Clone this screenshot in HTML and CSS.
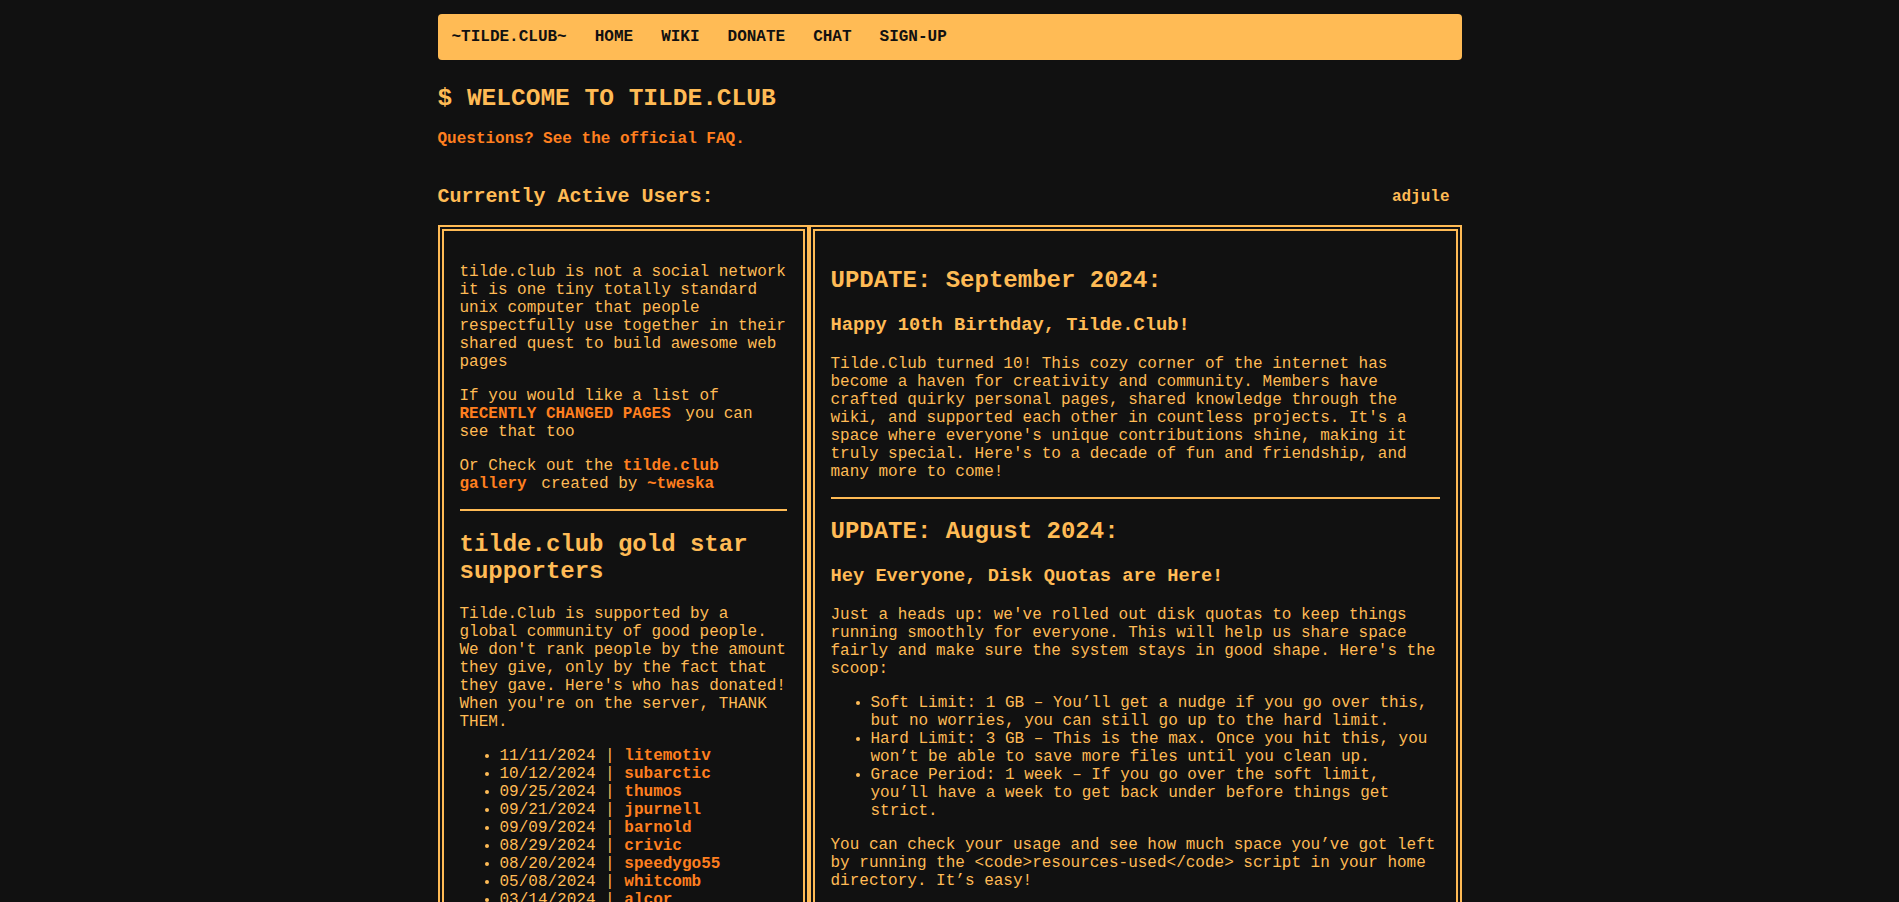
FILE: index.html
```html
<!DOCTYPE html>
<html lang="en">
<head>
<meta charset="utf-8">
<title>~tilde.club~</title>
<link rel="stylesheet" href="styles.css">
</head>
<body>
<div class="page">
  <nav class="nav">
    <a href="#">~TILDE.CLUB~</a>
    <a href="#">HOME</a>
    <a href="#">WIKI</a>
    <a href="#">DONATE</a>
    <a href="#">CHAT</a>
    <a href="#">SIGN-UP</a>
  </nav>

  <h1 class="title">$ WELCOME TO TILDE.CLUB</h1>
  <p class="faq"><a href="#">Questions? See the official FAQ.</a></p>

  <div class="users">
    <h3 class="users-title">Currently Active Users:</h3>
    <span class="who">adjule</span>
  </div>

  <div class="columns">
    <aside class="box side">
      <p>tilde.club is not a social network it is one tiny totally standard unix computer that people respectfully use together in their shared quest to build awesome web pages</p>
      <p>If you would like a list of <a class="gap" href="#">RECENTLY CHANGED PAGES</a> you can see that too</p>
      <p>Or Check out the <a class="gap" href="#">tilde.club gallery</a> created by <a href="#">~tweska</a></p>
      <hr>
      <h2>tilde.club gold star supporters</h2>
      <p>Tilde.Club is supported by a global community of good people. We don't rank people by the amount they give, only by the fact that they gave. Here's who has donated! When you're on the server, THANK THEM.</p>
      <ul class="donors">
        <li>11/11/2024 | <a href="#">litemotiv</a></li>
        <li>10/12/2024 | <a href="#">subarctic</a></li>
        <li>09/25/2024 | <a href="#">thumos</a></li>
        <li>09/21/2024 | <a href="#">jpurnell</a></li>
        <li>09/09/2024 | <a href="#">barnold</a></li>
        <li>08/29/2024 | <a href="#">crivic</a></li>
        <li>08/20/2024 | <a href="#">speedygo55</a></li>
        <li>05/08/2024 | <a href="#">whitcomb</a></li>
        <li>03/14/2024 | <a href="#">alcor</a></li>
        <li>02/02/2024 | <a href="#">deepend</a></li>
        <li>01/20/2024 | <a href="#">vilmibm</a></li>
        <li>12/25/2023 | <a href="#">ford</a></li>
      </ul>
    </aside>

    <main class="box news">
      <h2>UPDATE: September 2024:</h2>
      <h3>Happy 10th Birthday, Tilde.Club!</h3>
      <p>Tilde.Club turned 10! This cozy corner of the internet has become a haven for creativity and community. Members have crafted quirky personal pages, shared knowledge through the wiki, and supported each other in countless projects. It's a space where everyone's unique contributions shine, making it truly special. Here's to a decade of fun and friendship, and many more to come!</p>
      <hr>
      <h2>UPDATE: August 2024:</h2>
      <h3>Hey Everyone, Disk Quotas are Here!</h3>
      <p>Just a heads up: we've rolled out disk quotas to keep things running smoothly for everyone. This will help us share space fairly and make sure the system stays in good shape. Here's the scoop:</p>
      <ul>
        <li>Soft Limit: 1 GB – You’ll get a nudge if you go over this, but no worries, you can still go up to the hard limit.</li>
        <li>Hard Limit: 3 GB – This is the max. Once you hit this, you won’t be able to save more files until you clean up.</li>
        <li>Grace Period: 1 week – If you go over the soft limit, you’ll have a week to get back under before things get strict.</li>
      </ul>
      <p>You can check your usage and see how much space you’ve got left by running the &lt;code&gt;resources-used&lt;/code&gt; script in your home directory. It’s easy!</p>
      <hr>
      <h2>UPDATE: July 2024:</h2>
      <h3>New Wiki Pages</h3>
      <p>We've added a handful of new pages to the wiki covering shell basics, editing your web page and using the chat. Take a look and feel free to contribute!</p>
    </main>
  </div>
</div>
</body>
</html>
```

FILE: styles.css
```css
html {
  background: #111111;
}

body {
  margin: 0;
  background: #111111;
  color: #ffbb55;
  font-family: "Liberation Mono", "DejaVu Sans Mono", monospace;
  font-size: 16px;
}

a {
  color: #ff7f1f;
  font-weight: bold;
  text-decoration: none;
}

.page {
  max-width: 1024px;
  margin: 0 auto;
  padding-top: 14px;
}

.nav {
  display: flex;
  background: #ffbb55;
  border-radius: 4px;
}

.nav a {
  padding: 14px;
  color: #111111;
  font-weight: bold;
}

.title {
  font-size: 24.5px;
  margin: 25px 0 18px;
}

.faq {
  margin: 0;
}

.users {
  display: flex;
  justify-content: space-between;
  align-items: center;
  margin: 37px 0 17px;
}

.users-title {
  font-size: 20px;
  margin: 0;
}

.who {
  font-weight: bold;
  padding-right: 12px;
}

.columns {
  display: grid;
  grid-template-columns: 371px 1fr;
}

.box {
  border: 6px double #ffbb55;
  padding: 16px;
}

.box h2 {
  font-size: 24px;
}

.box h3 {
  font-size: 18.72px;
}

.box hr {
  border: 0;
  border-top: 2px solid #ffbb55;
  margin: 8px 0;
}

.gap {
  padding-right: 5px;
}

.donors {
  margin-bottom: 0;
}
```
